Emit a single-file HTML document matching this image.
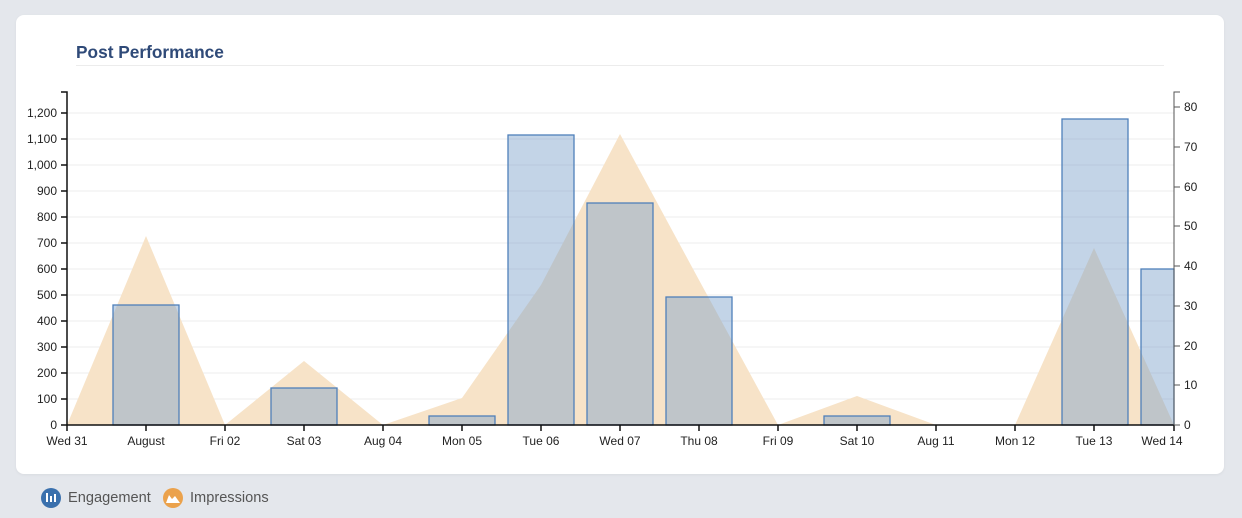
<!DOCTYPE html>
<html><head><meta charset="utf-8"><style>
body{margin:0;width:1242px;height:518px;background:#e4e7ec;font-family:"Liberation Sans",sans-serif;overflow:hidden;position:relative}
.card{position:absolute;left:16px;top:15px;width:1208px;height:459px;background:#fff;border-radius:8px;box-shadow:0 1px 3px rgba(0,0,0,0.05)}
.title{position:absolute;left:76px;top:42px;font-size:17.3px;font-weight:bold;color:#2f4a78}
.rule{position:absolute;left:76px;top:65px;width:1088px;height:1px;background:#ececec}
svg{position:absolute;left:0;top:0}
.leg{position:absolute;top:490px;font-size:14.6px;line-height:17px;color:#555}
</style></head><body>
<div class="card"></div>
<div class="title">Post Performance</div>
<div class="rule"></div>
<svg width="1242" height="518" font-family="Liberation Sans, sans-serif" font-size="12" fill="#222">
<g stroke="#ececec" stroke-width="1">
<line x1="67" x2="1174" y1="399" y2="399"/><line x1="67" x2="1174" y1="373" y2="373"/><line x1="67" x2="1174" y1="347" y2="347"/><line x1="67" x2="1174" y1="321" y2="321"/><line x1="67" x2="1174" y1="295" y2="295"/><line x1="67" x2="1174" y1="269" y2="269"/><line x1="67" x2="1174" y1="243" y2="243"/><line x1="67" x2="1174" y1="217" y2="217"/><line x1="67" x2="1174" y1="191" y2="191"/><line x1="67" x2="1174" y1="165" y2="165"/><line x1="67" x2="1174" y1="139" y2="139"/><line x1="67" x2="1174" y1="113" y2="113"/>
</g>
<polygon fill="#f7e3c8" points="67,425 146,236 225,425 304,361 383,425 462,398 541,285 620,134 699,280 778,425 857,396 936,425 1015,425 1094,248 1174,425"/>
<g fill="rgba(122,159,202,0.45)" stroke="#4f80ba" stroke-width="1.3">
<rect x="113" y="305" width="66" height="120"/>
<rect x="271" y="388" width="66" height="37"/>
<rect x="429" y="416" width="66" height="9"/>
<rect x="508" y="135" width="66" height="290"/>
<rect x="587" y="203" width="66" height="222"/>
<rect x="666" y="297" width="66" height="128"/>
<rect x="824" y="416" width="66" height="9"/>
<rect x="1062" y="119" width="66" height="306"/>
<rect x="1141" y="269" width="33" height="156"/>
</g>
<g stroke="#111" stroke-width="1.5" fill="none">
<path d="M61,92H67V425H1174"/>
<path d="M61,425h6M61,399h6M61,373h6M61,347h6M61,321h6M61,295h6M61,269h6M61,243h6M61,217h6M61,191h6M61,165h6M61,139h6M61,113h6"/>
<path d="M67,425v6M146,425v6M225,425v6M304,425v6M383,425v6M462,425v6M541,425v6M620,425v6M699,425v6M778,425v6M857,425v6M936,425v6M1015,425v6M1094,425v6M1174,425v6"/>
</g>
<g stroke="#555" stroke-width="1" fill="none">
<path d="M1180,92H1174V425M1174,425h6M1174,385h6M1174,346h6M1174,306h6M1174,266h6M1174,226h6M1174,187h6M1174,147h6M1174,107h6"/>
</g>
<g text-anchor="end">
<text x="57" y="429">0</text><text x="57" y="403">100</text><text x="57" y="377">200</text><text x="57" y="351">300</text><text x="57" y="325">400</text><text x="57" y="299">500</text><text x="57" y="273">600</text><text x="57" y="247">700</text><text x="57" y="221">800</text><text x="57" y="195">900</text><text x="57" y="169">1,000</text><text x="57" y="143">1,100</text><text x="57" y="117">1,200</text>
</g>
<g>
<text x="1184" y="429">0</text><text x="1184" y="389">10</text><text x="1184" y="350">20</text><text x="1184" y="310">30</text><text x="1184" y="270">40</text><text x="1184" y="230">50</text><text x="1184" y="191">60</text><text x="1184" y="151">70</text><text x="1184" y="111">80</text>
</g>
<g text-anchor="middle">
<text x="67" y="445">Wed 31</text><text x="146" y="445">August</text><text x="225" y="445">Fri 02</text><text x="304" y="445">Sat 03</text><text x="383" y="445">Aug 04</text><text x="462" y="445">Mon 05</text><text x="541" y="445">Tue 06</text><text x="620" y="445">Wed 07</text><text x="699" y="445">Thu 08</text><text x="778" y="445">Fri 09</text><text x="857" y="445">Sat 10</text><text x="936" y="445">Aug 11</text><text x="1015" y="445">Mon 12</text><text x="1094" y="445">Tue 13</text><text x="1162" y="445">Wed 14</text>
</g>
<circle cx="51" cy="498" r="10" fill="#3a70ad"/>
<g fill="#fff"><rect x="46" y="493" width="2" height="9"/><rect x="50" y="496" width="2" height="6"/><rect x="54" y="494" width="2" height="8"/></g>
<circle cx="173" cy="498" r="10" fill="#eba24c"/>
<polygon fill="#fff" points="166,503 169,495 172,499 175,496 180,503"/>
</svg>
<div class="leg" style="left:68px">Engagement</div>
<div class="leg" style="left:190px">Impressions</div>
</body></html>
